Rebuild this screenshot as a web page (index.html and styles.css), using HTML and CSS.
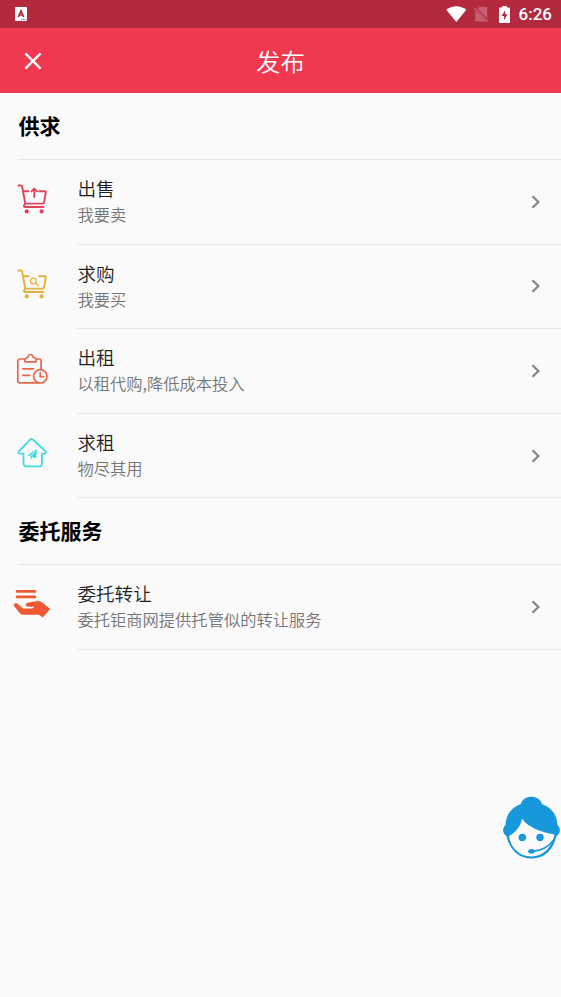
FILE: index.html
```html
<!DOCTYPE html>
<html lang="zh-CN">
<head>
<meta charset="utf-8">
<title>发布</title>
<link rel="stylesheet" href="styles.css">
</head>
<body>
<div class="status">
  <svg class="status-app" width="12" height="14" viewBox="0 0 12 14"><rect width="12" height="14" rx="1" fill="#fff"/><path d="M3.300 10 6 3.800 8.700 10M4.300 8h3.400" fill="none" stroke="#b32a3f" stroke-width="1.700"/><path d="M6 12.400h5" stroke="#b32a3f" stroke-width=".8" stroke-dasharray="1.200 .7"/></svg>
  <svg class="wifi" width="21" height="16" viewBox="0 0 21 16"><path d="M.3 3.800C6-.9 14.600-.9 20.300 3.800L10.300 16z" fill="#fff"/></svg>
  <svg class="sim" width="15" height="17" viewBox="0 0 15 17"><path d="M5.500 1H13.200V12.300L3.600 2.900zM1.300 4.500 12.500 15.500H1.300z" fill="#c86072"/><path d="M.5 2.200 14 15.800" stroke="#c86072" stroke-width="1.300"/></svg>
  <svg class="battery" width="11" height="17" viewBox="0 0 11 17"><path d="M3.300 0h4.400v1.600H10q1 0 1 1V16q0 1-1 1H1q-1 0-1-1V2.600q0-1 1-1h2.300z" fill="#fff"/><path d="M6.200 4.200 2.500 10h2.600v4.200L8.600 8.300H6.200z" fill="#b32a3f"/></svg>
  <span class="clock">6:26</span>
</div>
<header class="bar">
  <svg class="close" width="18" height="18" viewBox="0 0 18 18"><path d="m1.400 1.400 15.200 15.200m0-15.200L1.400 16.600" stroke="#fff" stroke-width="2.300"/></svg>
  <h1>发布</h1>
</header>
<main>
  <h2>供求</h2>
  <div class="row">
    <svg class="icon" width="40" height="36" viewBox="0 0 40 36" fill="none" stroke="#e4425c" stroke-width="1.900" stroke-linecap="round" stroke-linejoin="round"><path d="M5.500 2.500h2.300q1 0 1.300 1L12.300 20.500 11 22.800q-.4 1.200 1 1.200h18.500M10.300 8.200h5.200M26.200 8.200h5.500q1.300 0 1.100 1.200l-1.700 10q-.2 1.200-1.400 1.200H12.300M21.300 14V5.600m-2.800 2.800 2.800-2.800 2.800 2.800"/><g fill="#e4425c" stroke="none"><circle cx="13.700" cy="28.400" r="2.100"/><circle cx="28.600" cy="28.400" r="2.100"/></g></svg>
    <div class="copy"><div class="text"><h3>出售</h3><p>我要卖</p></div><svg class="chevron" width="10" height="14" viewBox="0 0 10 14"><path d="m1.500 1.200 5.900 5.800-5.900 5.800"/></svg></div>
  </div>
  <div class="row">
    <svg class="icon" width="40" height="36" viewBox="0 0 40 36" fill="none" stroke="#e9ae3c" stroke-width="1.900" stroke-linecap="round" stroke-linejoin="round"><path d="M5.500 2.500h2.300q1 0 1.300 1L12.300 20.500 11 22.800q-.4 1.200 1 1.200h18.500M10.300 8.200h5.200M26.200 8.200h5.500q1.300 0 1.100 1.200l-1.700 10q-.2 1.200-1.400 1.200H12.300"/><g stroke-width="1.200"><circle cx="20.300" cy="13" r="2.900"/><path d="m22.500 15.200 3 2.600"/></g><g fill="#e9ae3c" stroke="none"><circle cx="13.700" cy="28.400" r="2.100"/><circle cx="28.600" cy="28.400" r="2.100"/></g></svg>
    <div class="copy"><div class="text"><h3>求购</h3><p>我要买</p></div><svg class="chevron" width="10" height="14" viewBox="0 0 10 14"><path d="m1.500 1.200 5.900 5.800-5.900 5.800"/></svg></div>
  </div>
  <div class="row">
    <svg class="icon" width="40" height="36" viewBox="0 0 40 36" fill="none" stroke="#e5694c" stroke-width="1.700" stroke-linecap="round" stroke-linejoin="round"><path d="M11.500 6H7q-2.200 0-2.200 2.200v19.500q0 2.200 2.200 2.200h18.500M23.600 6h2.300q2.200 0 2.200 2.200V16.500M12 8.800q-1-3.800 2.700-4.300.8-3 2.800-3t2.800 3q3.700.5 2.700 4.300zM9.800 15.800h10.800M9.800 22.300h7"/><circle cx="27.300" cy="23.300" r="6.700"/><path d="M27.200 19.500v4.200h3.500"/></svg>
    <div class="copy"><div class="text"><h3>出租</h3><p>以租代购,降低成本投入</p></div><svg class="chevron" width="10" height="14" viewBox="0 0 10 14"><path d="m1.500 1.200 5.900 5.800-5.900 5.800"/></svg></div>
  </div>
  <div class="row">
    <svg class="icon" width="40" height="36" viewBox="0 0 40 36" fill="none" stroke="#41dce0" stroke-width="1.800" stroke-linecap="round" stroke-linejoin="round"><path d="M17.200 2.600q1.300-1.100 2.600 0L32.300 14q1.600 2-.7 2.700h-2.700v9.800q0 2.800-2.800 2.800H13.300q-2.800 0-2.800-2.800v-9.800H6.800q-2.300-.7-.7-2.700z"/><path d="m14.200 18.600 9.800-6.500-.9 9.500-3.300-1.600-2.100 2.500-.2-3.400z" fill="#41dce0" stroke="none"/><path d="m17.700 19 4.300-4.400" stroke="#fafafa" stroke-width=".8"/></svg>
    <div class="copy"><div class="text"><h3>求租</h3><p>物尽其用</p></div><svg class="chevron" width="10" height="14" viewBox="0 0 10 14"><path d="m1.500 1.200 5.900 5.800-5.900 5.800"/></svg></div>
  </div>
  <h2>委托服务</h2>
  <div class="row">
    <svg class="icon" width="40" height="36" viewBox="0 0 40 36"><path d="M4.200 3.400h17.800M4.200 8.900h17.800" stroke="#f05a32" stroke-width="2.700" stroke-linecap="round"/><path d="M1.500 15.700q1.500-1.200 3 .1l5.700 4.600h9q1.800-.2 1.700-1.600h-5.700q-2.400-.1-2.500-2.100 0-1.900 2.700-2.300l9.200-1.500q2.300-.1 4.300 1.400l8.300 6.800-7.400 8.400-3.700-2.800H9.600q-1.600 0-2.800-1.400L1 17.900q-1-1.200.5-2.200z" fill="#f05a32"/></svg>
    <div class="copy"><div class="text"><h3>委托转让</h3><p>委托钜商网提供托管似的转让服务</p></div><svg class="chevron" width="10" height="14" viewBox="0 0 10 14"><path d="m1.500 1.200 5.900 5.800-5.900 5.800"/></svg></div>
  </div>
</main>
<svg class="service" width="58" height="64" viewBox="0 0 58 64"><path d="M19 8C21-1.500 37-2 40 8 50 12 55 19 55.500 29 59 32 58.500 38 54.500 40 51 54 43 62.500 29.500 62.500 17 62.500 8 55 4.500 40 .5 38 0 32 3.500 29 4 18 10 11 19 8z" fill="#1797dc"/><path d="M20 22.500C26 31.500 39 36 52.500 38.500 50 51 41.500 60.500 29.500 60.500 17 60.500 8.500 51.500 7 40 14 36 19 30 20 22.500z" fill="#fafafa"/><g fill="#1797dc"><circle cx="20.300" cy="41.500" r="3.700"/><circle cx="38" cy="41.500" r="3.700"/><ellipse cx="29.500" cy="55.200" rx="3.300" ry="2.300"/></g><path d="M31 55.200Q44 54.500 51.500 44" fill="none" stroke="#1797dc" stroke-width="1.400"/></svg>
</body>
</html>
```
FILE: styles.css
```css
* { box-sizing: border-box; }
body {
  margin: 0;
  min-height: 997px;
  background: #fafafa;
  color: #1f1f1f;
  font-family: "Noto Sans CJK SC", sans-serif;
}
h1, h2, h3, p { margin: 0; font-weight: 400; white-space: nowrap; }
svg { display: block; flex: none; }
.status {
  display: flex;
  align-items: center;
  height: 28px;
  padding: 0 9px 0 15px;
  background: #b32a3f;
}
.wifi { margin-left: auto; margin-right: 7px; }
.sim { margin-right: 10px; }
.battery { margin-right: 9px; }
.clock { color: #fff; font: 500 17px/28px Roboto, sans-serif; }
.bar {
  display: grid;
  grid-template-columns: 1fr auto 1fr;
  align-items: center;
  height: 65.400px;
  background: #f03851;
}
.close { margin-left: 24px; }
.bar h1 { color: #fff; font-size: 24.400px; font-weight: 350; line-height: 36px; }
h2 {
  height: 66.600px;
  margin-left: 18px;
  padding-left: .6px;
  border-bottom: 1px solid #e7e7e7;
  color: #000;
  font-size: 21px;
  font-weight: 700;
  line-height: 65px;
}
.row { display: flex; height: 84.600px; }
.icon { margin: 23.500px 23.700px 0 13.300px; }
.copy {
  display: flex;
  flex: 1;
  align-items: center;
  padding-right: 20px;
  border-bottom: 1px solid #e7e7e7;
}
.text { flex: 1; padding-left: .4px; padding-bottom: 1px; }
h3 { font-size: 18.600px; font-weight: 350; line-height: 26px; }
p { color: #757575; font-size: 16.300px; font-weight: 350; line-height: 26px; }
.chevron path { fill: none; stroke: #858585; stroke-width: 2.200; }
.service { position: absolute; top: 796px; right: 1px; }
```
